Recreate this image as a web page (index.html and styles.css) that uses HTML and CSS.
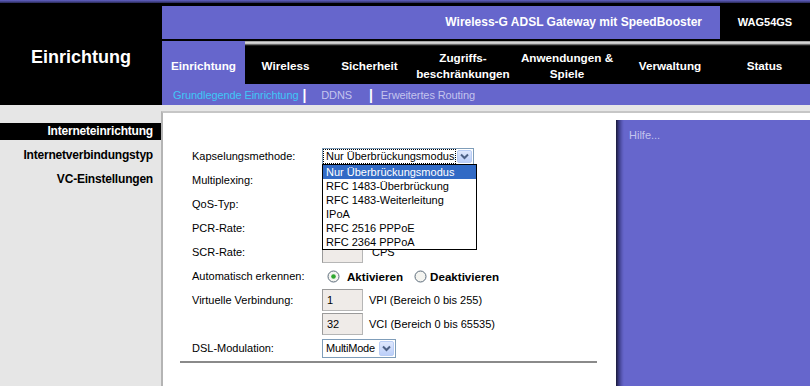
FILE: index.html
```html
<!DOCTYPE html>
<html lang="de">
<head>
    <meta charset="UTF-8">
    <title>Einrichtung</title>
    <link rel="stylesheet" href="styles.css">
</head>
<body>
    <div class="topstrip"></div>
    <div class="header">
        <div class="brand">Einrichtung</div>
        <div class="head-right">
            <div class="titlebar">
                <div class="product">Wireless-G ADSL Gateway mit SpeedBooster</div>
                <div class="model">WAG54GS</div>
            </div>
            <ul class="tabs">
                <li class="tab active" style="width:83px">Einrichtung</li>
                <li class="tab" style="width:81px">Wireless</li>
                <li class="tab" style="width:87px">Sicherheit</li>
                <li class="tab" style="width:100px">Zugriffs-<br>beschränkungen</li>
                <li class="tab" style="width:108px">Anwendungen &amp;<br>Spiele</li>
                <li class="tab" style="width:98px">Verwaltung</li>
                <li class="tab" style="width:91px">Status</li>
            </ul>
            <div class="subnav">
                <span class="sub current">Grundlegende Einrichtung</span>
                <span class="sep sep1">|</span>
                <span class="sub ddns">DDNS</span>
                <span class="sep sep2">|</span>
                <span class="sub routing">Erweitertes Routing</span>
            </div>
        </div>
    </div>

    <div class="main">
        <div class="sidebar">
            <div class="side-title">Interneteinrichtung</div>
            <div class="side-item">Internetverbindungstyp</div>
            <div class="side-item">VC-Einstellungen</div>
        </div>

        <div class="content">
            <div class="form-area">
                <div class="form">
                    <div class="row">
                        <div class="label">Kapselungsmethode:</div>
                        <div class="field">
                            <div class="select open" style="width:152px">
                                <span class="sel-text focus">Nur Überbrückungsmodus</span>
                                <span class="sel-btn"><svg width="9" height="7" viewBox="0 0 9 7"><path d="M1 1.5 L4.5 5 L8 1.5" fill="none" stroke="#4d6185" stroke-width="2"/></svg></span>
                                <ul class="dropdown">
                                    <li class="selected">Nur Überbrückungsmodus</li>
                                    <li>RFC 1483-Überbrückung</li>
                                    <li>RFC 1483-Weiterleitung</li>
                                    <li>IPoA</li>
                                    <li>RFC 2516 PPPoE</li>
                                    <li>RFC 2364 PPPoA</li>
                                </ul>
                            </div>
                        </div>
                    </div>
                    <div class="row">
                        <div class="label">Multiplexing:</div>
                    </div>
                    <div class="row">
                        <div class="label">QoS-Typ:</div>
                    </div>
                    <div class="row">
                        <div class="label">PCR-Rate:</div>
                    </div>
                    <div class="row">
                        <div class="label">SCR-Rate:</div>
                        <div class="field"><span class="box"></span><span class="unit cps">CPS</span></div>
                    </div>
                    <div class="row">
                        <div class="label">Automatisch erkennen:</div>
                        <div class="field">
                            <span class="radio first"><svg width="13" height="13" viewBox="0 0 13 13"><circle cx="6.5" cy="6.5" r="5.5" fill="#f4f4f0" stroke="#5b6b7b"/><circle cx="6.5" cy="6.5" r="2.3" fill="#2fa82f"/></svg></span>
                            <span class="opt">Aktivieren</span>
                            <span class="radio second"><svg width="13" height="13" viewBox="0 0 13 13"><circle cx="6.5" cy="6.5" r="5.5" fill="#f4f4f0" stroke="#5b6b7b"/></svg></span>
                            <span class="opt opt2">Deaktivieren</span>
                        </div>
                    </div>
                    <div class="row">
                        <div class="label">Virtuelle Verbindung:</div>
                        <div class="field"><span class="box">1</span><span class="unit">VPI (Bereich 0 bis 255)</span></div>
                    </div>
                    <div class="row">
                        <div class="label"></div>
                        <div class="field"><span class="box">32</span><span class="unit">VCI (Bereich 0 bis 65535)</span></div>
                    </div>
                    <div class="row">
                        <div class="label">DSL-Modulation:</div>
                        <div class="field">
                            <div class="select small" style="width:74px">
                                <span class="sel-text">MultiMode</span>
                                <span class="sel-btn"><svg width="9" height="7" viewBox="0 0 9 7"><path d="M1 1.5 L4.5 5 L8 1.5" fill="none" stroke="#4d6185" stroke-width="2"/></svg></span>
                            </div>
                        </div>
                    </div>
                </div>
                <div class="rule"></div>
            </div>
            <div class="help">Hilfe...</div>
        </div>
    </div>
</body>
</html>
```

FILE: styles.css
```css
body {
    margin: 0;
    width: 810px;
    height: 386px;
    overflow: hidden;
    font-family: "Liberation Sans", Arial, sans-serif;
    font-size: 11px;
    background-color: #e6e6e6;
}
.topstrip {
    height: 3px;
    background: linear-gradient(to bottom, #6262c4, #2a2a5a);
}
.header {
    display: grid;
    grid-template-columns: 162px 1fr;
    background-color: #000;
    padding-top: 3px;
}
.brand {
    color: #fff;
    font-weight: bold;
    font-size: 18px;
    text-align: center;
    padding-top: 41px;
}
.titlebar {
    display: flex;
    height: 33px;
    margin-bottom: 2px;
}
.product {
    flex: 1;
    background-color: #6666cc;
    color: #fff;
    font-weight: bold;
    font-size: 12px;
    text-align: right;
    padding-right: 18px;
    line-height: 32px;
}
.model {
    width: 90px;
    color: #fff;
    font-weight: bold;
    font-size: 11px;
    text-align: center;
    line-height: 32px;
}
.tabs {
    display: flex;
    list-style: none;
    margin: 0;
    padding: 0;
    height: 43px;
}
.tab {
    box-sizing: border-box;
    display: flex;
    align-items: center;
    justify-content: center;
    text-align: center;
    color: #fff;
    font-weight: bold;
    font-size: 11.7px;
    line-height: 16px;
    padding-top: 7px;
    white-space: nowrap;
    background: linear-gradient(to bottom, #8c8c8c 0, #ececec 2px, #9c9c9c 3px, #3a3a3a 4px, #000 5px);
}
.tab.active {
    background: #6666cc;
}
.subnav {
    display: flex;
    align-items: center;
    height: 21px;
    background-color: #6666cc;
    padding-left: 11px;
    color: #c4c4ee;
    white-space: nowrap;
    letter-spacing: -0.1px;
}
.sub.current {
    color: #3fc6f6;
}
.sep {
    color: #fff;
    font-weight: bold;
    font-size: 14px;
}
.sep1 {
    margin-left: 4px;
}
.ddns {
    margin-left: 15px;
}
.sep2 {
    margin-left: 17px;
}
.routing {
    margin-left: 8px;
}
.main {
    display: grid;
    grid-template-columns: 161px 1fr;
    padding-top: 6px;
    height: 275px;
}
.sidebar {
    padding-top: 12px;
}
.side-title {
    background-color: #000;
    color: #fff;
    font-weight: bold;
    font-size: 12px;
    letter-spacing: -0.2px;
    text-align: right;
    padding-right: 8px;
    height: 17px;
    line-height: 17px;
    margin-bottom: 3px;
}
.side-item {
    color: #000;
    font-weight: bold;
    font-size: 12px;
    letter-spacing: -0.2px;
    text-align: right;
    padding-right: 8px;
    line-height: 24px;
}
.content {
    display: flex;
    background-color: #fff;
    border-top: 2px solid #c6c6c6;
    border-left: 2px solid #b4b4b4;
}
.form-area {
    width: 453px;
}
.form {
    padding: 31px 0 0 29px;
}
.row {
    display: flex;
    align-items: center;
    height: 24px;
}
.label {
    width: 130px;
    color: #000;
}
.field {
    display: flex;
    align-items: center;
}
.select {
    position: relative;
    box-sizing: border-box;
    height: 17px;
    border: 1px solid #7f9db9;
    background-color: #fff;
    display: flex;
    align-items: center;
    font-size: 11px;
}
.select.small {
    height: 19px;
    letter-spacing: -0.2px;
}
.sel-text {
    flex: 1;
    padding-left: 3px;
    line-height: 13px;
    white-space: nowrap;
}
.sel-text.focus {
    margin: 0 2px 0 1px;
    padding-left: 2px;
    outline: 1px dotted #000;
}
.sel-btn {
    box-sizing: border-box;
    width: 15px;
    height: calc(100% - 2px);
    margin-right: 1px;
    display: flex;
    align-items: center;
    justify-content: center;
    border: 1px solid #b9cdf5;
    border-radius: 2px;
    background: linear-gradient(to bottom, #dfe8fd, #bccff9);
}
.dropdown {
    position: absolute;
    top: 15px;
    left: -1px;
    width: 155px;
    box-sizing: border-box;
    margin: 0;
    padding: 0;
    list-style: none;
    background-color: #fff;
    border: 1px solid #000;
    z-index: 5;
}
.dropdown li {
    height: 14px;
    line-height: 14px;
    padding-left: 3px;
    white-space: nowrap;
}
.dropdown li.selected {
    background-color: #316ac5;
    color: #fff;
}
.box {
    box-sizing: border-box;
    width: 41px;
    height: 22px;
    line-height: 20px;
    padding-left: 4px;
    background-color: #efebe8;
    border: 1px solid #b6b6b6;
    border-top-color: #9a9a9a;
    border-left-color: #9a9a9a;
}
.unit {
    margin-left: 6px;
}
.unit.cps {
    margin-left: 9px;
}
.radio {
    display: flex;
}
.radio.first {
    margin-left: 5px;
}
.radio.second {
    margin-left: 11px;
}
.opt {
    font-weight: bold;
    font-size: 11.6px;
    margin-left: 7px;
}
.opt.opt2 {
    margin-left: 3px;
}
.rule {
    height: 2px;
    background-color: #8a8a8a;
    margin: 1px 19px 0 17px;
}
.help {
    flex: 1;
    margin-top: 7px;
    background: linear-gradient(to right, #1a1a3a 0, #3c3c88 3px, #5a5ab8 6px, #6666cc 8px);
    color: #c4c4ee;
    padding: 9px 0 0 13px;
}
```
